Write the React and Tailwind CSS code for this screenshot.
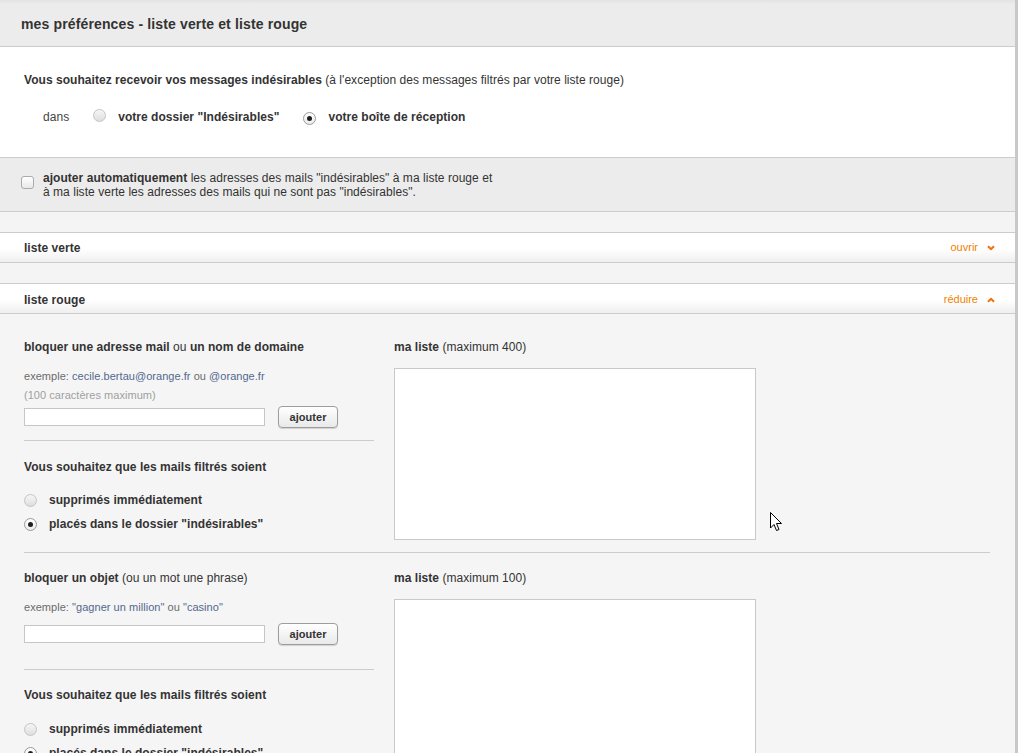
import React from "react";

const Radio = ({ checked }) => (
  <span
    className={
      "inline-flex w-[13px] h-[13px] rounded-full border items-center justify-center shrink-0 " +
      (checked
        ? "border-[#9a9a9a] bg-[linear-gradient(#ffffff,#ececec)]"
        : "border-[#c4c4c4] bg-[linear-gradient(#f6f6f6,#dedede)]")
    }
  >
    {checked && <span className="w-[5px] h-[5px] rounded-full bg-[#1e1e1e]" />}
  </span>
);

const ChevronDown = () => (
  <svg width="8" height="6" viewBox="0 0 8 6" className="ml-[9px]">
    <path d="M1 1.2 L4 4.2 L7 1.2" fill="none" stroke="#f07000" strokeWidth="2" />
  </svg>
);
const ChevronUp = () => (
  <svg width="8" height="6" viewBox="0 0 8 6" className="ml-[9px]">
    <path d="M1 4.8 L4 1.8 L7 4.8" fill="none" stroke="#f07000" strokeWidth="2" />
  </svg>
);

const Button = () => (
  <button className="h-[22px] w-[60px] rounded-[4px] border border-[#9d9d9d] bg-[linear-gradient(#ffffff,#e9e9e9)] shadow-[0_1px_1px_rgba(0,0,0,0.15)] text-[11px] font-bold text-[#333] leading-none">
    ajouter
  </button>
);

const Block = ({ first }) => (
  <div className={"flex items-start border-b border-[#cccccc] " + (first ? "pt-[26px] pb-[12px]" : "pt-[18px] pb-[12px]")}>
    <div className="w-[350px] shrink-0">
      {first ? (
        <div className="leading-[14px] text-[12px]">
          <b>bloquer une adresse mail</b> ou <b>un nom de domaine</b>
        </div>
      ) : (
        <div className="leading-[14px] text-[12px]">
          <b>bloquer un objet</b> (ou un mot une phrase)
        </div>
      )}
      {first ? (
        <>
          <div className="mt-[15px] leading-[14px] text-[11px] text-[#6b6b6b]">
            exemple: <span className="text-[#52688e]">cecile.bertau@orange.fr</span> ou{" "}
            <span className="text-[#52688e]">@orange.fr</span>
          </div>
          <div className="mt-[5px] leading-[14px] text-[11px] text-[#a0a0a0]">(100 caractères maximum)</div>
        </>
      ) : (
        <div className="mt-[15px] leading-[14px] text-[11px] text-[#6b6b6b]">
          exemple: <span className="text-[#52688e]">"gagner un million"</span> ou{" "}
          <span className="text-[#52688e]">"casino"</span>
        </div>
      )}
      <div className={"flex items-center gap-[13px] " + (first ? "mt-[4px]" : "mt-[9px]")}>
        <input type="text" className="w-[241px] h-[18px] border border-[#c6c6c6] bg-white outline-none" />
        <Button />
      </div>
      <div className={"border-t border-[#cccccc] " + (first ? "mt-[12px]" : "mt-[24px]")} />
      <div className={"leading-[14px] text-[12px] font-bold " + (first ? "mt-[19px]" : "mt-[18px]")}>
        Vous souhaitez que les mails filtrés soient
      </div>
      <div className={"flex items-center h-[14px] " + (first ? "mt-[19px]" : "mt-[20px]")}>
        <Radio />
        <span className="ml-[12px] text-[12px] font-bold leading-[14px]">supprimés immédiatement</span>
      </div>
      <div className="flex items-center h-[14px] mt-[10px]">
        <Radio checked />
        <span className="ml-[12px] text-[12px] font-bold leading-[14px]">placés dans le dossier "indésirables"</span>
      </div>
    </div>
    <div className="ml-[20px]">
      <div className="leading-[14px] text-[12px]">
        <b>ma liste</b> (maximum {first ? "400" : "100"})
      </div>
      <textarea
        className={"mt-[14px] block w-[362px] border border-[#c9c9c9] bg-white resize-none outline-none " + (first ? "h-[172px]" : "h-[200px]")}
      />
    </div>
  </div>
);

export default function App() {
  return (
    <div
      className="relative w-[1030px] h-[753px] overflow-hidden bg-white flex text-[#333] tracking-[0.04px]"
      style={{ fontFamily: '"Liberation Sans", Arial, sans-serif' }}
    >
      <div className="w-[1018px] shrink-0 border-r-[3px] border-[#c8c8c8] flex flex-col">
        {/* header */}
        <div className="h-[47px] shrink-0 border-b border-[#cccccc] bg-[linear-gradient(#e3e3e3,#ececec_4px,#ececec)] flex items-center pl-[21px] pt-[2px] text-[14px] font-bold text-[#333] tracking-[0.14px]">
          mes préférences - liste verte et liste rouge
        </div>

        {/* white section */}
        <div className="h-[111px] shrink-0 border-b border-[#cccccc] bg-white pl-[24px] pt-[26px] text-[12px]">
          <div className="leading-[14px]">
            <b>Vous souhaitez recevoir vos messages indésirables</b> (à l'exception des messages filtrés par votre liste rouge)
          </div>
          <div className="mt-[23px] flex items-center h-[14px] leading-[14px]">
            <span className="ml-[19px] text-[#444]">dans</span>
            <span className="ml-[24px]"><Radio /></span>
            <span className="ml-[12px] font-bold">votre dossier "Indésirables"</span>
            <span className="ml-[24px]"><Radio checked /></span>
            <span className="ml-[12px] font-bold">votre boîte de réception</span>
          </div>
        </div>

        {/* gray checkbox section */}
        <div className="h-[54px] shrink-0 border-b border-[#cccccc] bg-[#ececec] flex items-start pl-[21px] pt-[13px] text-[12px]">
          <span className="mt-[5px] w-[13px] h-[13px] rounded-[3px] border border-[#ababab] bg-[linear-gradient(#ffffff,#e8e8e8)] shrink-0" />
          <div className="ml-[9px] leading-[14px]">
            <b>ajouter automatiquement</b> les adresses des mails "indésirables" à ma liste rouge et
            <br />à ma liste verte les adresses des mails qui ne sont pas "indésirables".
          </div>
        </div>

        <div className="h-[20px] shrink-0 bg-[#f4f4f4]" />

        {/* liste verte */}
        <div className="h-[31px] shrink-0 border-t border-b border-[#cccccc] bg-[linear-gradient(#ffffff_55%,#efefef)] flex items-center justify-between pl-[24px] pr-[20px] text-[12px]">
          <b>liste verte</b>
          <span className="flex items-center text-[11px] text-[#f08200] tracking-normal">
            ouvrir
            <ChevronDown />
          </span>
        </div>

        <div className="h-[20px] shrink-0 bg-[#f4f4f4]" />

        {/* liste rouge */}
        <div className="h-[31px] shrink-0 border-t border-b border-[#cccccc] bg-[linear-gradient(#ffffff_55%,#efefef)] flex items-center justify-between pl-[24px] pr-[20px] pt-[2px] text-[12px]">
          <b>liste rouge</b>
          <span className="flex items-center text-[11px] text-[#f08200] tracking-normal">
            réduire
            <ChevronUp />
          </span>
        </div>

        {/* content */}
        <div className="flex-1 bg-[#f5f5f5] pl-[24px] pr-[25px]">
          <Block first />
          <Block />
        </div>
      </div>

      {/* mouse pointer */}
      <svg className="absolute left-[770px] top-[512px]" width="13" height="21" viewBox="0 0 13 21">
        <path
          d="M0.5 0.5 L0.5 16 L4 12.5 L6.5 18.5 L9 17.5 L6.5 11.5 L11.5 11.5 Z"
          fill="#ffffff"
          stroke="#000000"
          strokeWidth="1"
          strokeLinejoin="round"
        />
      </svg>
    </div>
  );
}
